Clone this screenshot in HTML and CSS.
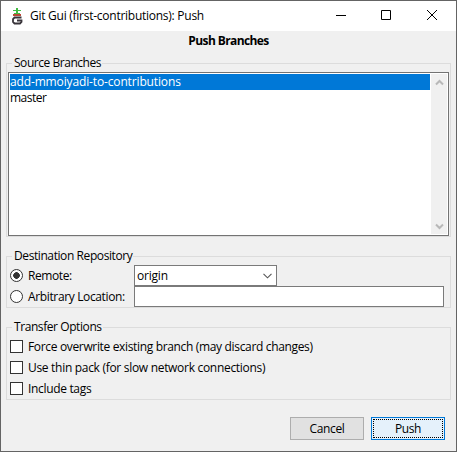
FILE: index.html
```html
<!DOCTYPE html>
<html lang="en">
<head>
<meta charset="utf-8">
<title>Git Gui (first-contributions): Push</title>
<link rel="stylesheet" href="styles.css">
</head>
<body>
<div class="window">
  <header class="titlebar">
    <svg class="logo" width="12" height="18" viewBox="0 0 12 18">
      <path d="M4 1h2v2h3v1H6v2h2v1H2V6h2V4H1V3h3z" fill="#43bd43"/>
      <path d="M1 7h8v2H1z" fill="#b94a38"/>
      <path d="M9.500 10.500H2.500L1 12v3l1.500 1.500H8L9.500 15v-1.500H5" fill="none" stroke="#38343a" stroke-width="1.800"/>
    </svg>
    <h1 class="title"><span class="t-title">Git Gui (first-contributions): Push</span></h1>
    <svg class="controls" width="104" height="12" viewBox="0 0 104 12" fill="none" stroke="#000">
      <path d="M1 6.500h10"/>
      <path d="M46.500 1.500h9v9h-9z"/>
      <path d="M92 1l10 10M102 1l-10 10"/>
    </svg>
  </header>
  <main class="content">
    <h2 class="heading"><span class="t-heading">Push Branches</span></h2>
    <section class="group source">
      <h3 class="legend"><span class="t-source">Source Branches</span></h3>
      <div class="listbox">
        <ul class="items">
          <li class="item selected"><span class="t-branch">add-mmoiyadi-to-contributions</span></li>
          <li class="item"><span class="t-master">master</span></li>
        </ul>
        <div class="scrollbar">
          <svg width="9" height="7" viewBox="0 0 9 7"><path d="M1 5.500l3.500-3.500 3.500 3.500" fill="none" stroke="#b8b8b8" stroke-width="2"/></svg>
          <svg width="9" height="7" viewBox="0 0 9 7"><path d="M1 1.500l3.500 3.500 3.500-3.500" fill="none" stroke="#b8b8b8" stroke-width="2"/></svg>
        </div>
      </div>
    </section>
    <section class="group destination">
      <h3 class="legend"><span class="t-dest">Destination Repository</span></h3>
      <div class="field">
        <label class="option"><i class="radio checked"></i><span class="t-remote">Remote:</span></label>
        <div class="combo"><span class="t-origin">origin</span>
          <svg width="9" height="6" viewBox="0 0 9 6"><path d="M.5 .8l4 4 4-4" fill="none" stroke="#555" stroke-width="1.100"/></svg>
        </div>
      </div>
      <div class="field">
        <label class="option"><i class="radio"></i><span class="t-location">Arbitrary Location:</span></label>
        <div class="entry"></div>
      </div>
    </section>
    <section class="group transfer">
      <h3 class="legend"><span class="t-transfer">Transfer Options</span></h3>
      <label class="check"><i class="box"></i><span class="t-force">Force overwrite existing branch (may discard changes)</span></label>
      <label class="check"><i class="box"></i><span class="t-thin">Use thin pack (for slow network connections)</span></label>
      <label class="check"><i class="box"></i><span class="t-tags">Include tags</span></label>
    </section>
    <footer class="actions">
      <div class="button"><span class="t-cancel">Cancel</span></div>
      <div class="button primary"><span class="focus"><span class="t-push">Push</span></span></div>
    </footer>
  </main>
</div>
</body>
</html>
```
FILE: styles.css
```css
* { box-sizing: border-box; margin: 0; padding: 0; }
body { width: 457px; height: 452px; overflow: hidden; font: 12px/16px "Open Sans", "Noto Sans", sans-serif; color: #000; }
h1, h2, h3 { font-size: 12px; font-weight: 400; }
span { white-space: nowrap; }
.window { width: 457px; height: 452px; background: #f0f0f0; border: 1px solid #646464; }
.titlebar { height: 30px; background: #fff; display: flex; align-items: center; padding: 0 18px 0 11px; }
.logo { flex: none; }
.title { margin-left: 6px; flex: 1; }
.controls { flex: none; margin-right: -1px; margin-top: -2px; }
.heading { height: 22px; line-height: 20px; text-align: center; font-weight: 700; }
.group { width: 445px; margin-left: 5px; border: 1px solid #dcdcdc; }
.legend { width: max-content; height: 16px; line-height: 16px; margin: -9px 0 0 5px; padding: 0 1px 0 2px; background: #f0f0f0; }
.source { height: 174px; margin-top: 10px; }
.listbox { width: 441px; height: 164px; margin: 1px 0 0 1px; padding: 1px; border: 1px solid #737373; background: #fff; display: flex; justify-content: space-between; }
.items { width: 420px; list-style: none; }
.item { height: 16px; line-height: 16px; }
.selected { background: #0078d7; color: #fff; }
.scrollbar { width: 16px; background: #f0f0f0; display: flex; flex-direction: column; align-items: center; justify-content: space-between; padding: 5px 0 4px; }
.destination { height: 52px; margin-top: 19px; }
.field { display: flex; height: 21px; }
.destination .legend + .field { margin-top: 1px; }
.option { width: 127px; display: flex; align-items: center; gap: 5px; padding-left: 3px; }
.radio { width: 13px; height: 13px; flex: none; border: 1px solid #333; border-radius: 50%; background: #fff; }
.checked { background: radial-gradient(circle, #333 0 3px, #fff 3.600px); }
.combo, .entry { border: 1px solid #7a7a7a; background: #fff; height: 21px; }
.combo { width: 143px; display: flex; align-items: center; justify-content: space-between; padding: 0 4px 0 2px; }
.entry { width: 310px; }
.transfer { height: 73px; margin-top: 19px; }
.check { display: flex; align-items: center; gap: 5px; height: 21px; padding-left: 3px; }
.transfer .legend + .check { margin-top: 1px; }
.box { width: 13px; height: 13px; flex: none; border: 1px solid #333; background: #fff; }
.actions { display: flex; justify-content: flex-end; gap: 7px; margin-top: 17px; padding-right: 11px; }
.button { width: 74px; height: 23px; border: 1px solid #adadad; background: #e1e1e1; display: flex; align-items: center; justify-content: center; }
.primary { border-color: #0078d7; background: #e5f1fb; padding: 1px; }
.focus { width: 100%; height: 100%; border: 1px dotted #000; display: flex; align-items: center; justify-content: center; }
.t-title { letter-spacing: -.26px; }
.t-heading { letter-spacing: -.6px; }
.t-source { letter-spacing: -.46px; }
.t-branch { letter-spacing: -.14px; }
.t-master { letter-spacing: -.5px; }
.t-dest { letter-spacing: -.41px; }
.t-remote { letter-spacing: -.4px; }
.t-origin { letter-spacing: -.2px; }
.t-location { letter-spacing: -.36px; }
.t-transfer { letter-spacing: -.42px; }
.t-force { letter-spacing: -.34px; }
.t-thin { letter-spacing: -.3px; }
.t-tags { letter-spacing: -.33px; }
.t-cancel { letter-spacing: -.35px; }
.t-push { letter-spacing: -.4px; }
```
